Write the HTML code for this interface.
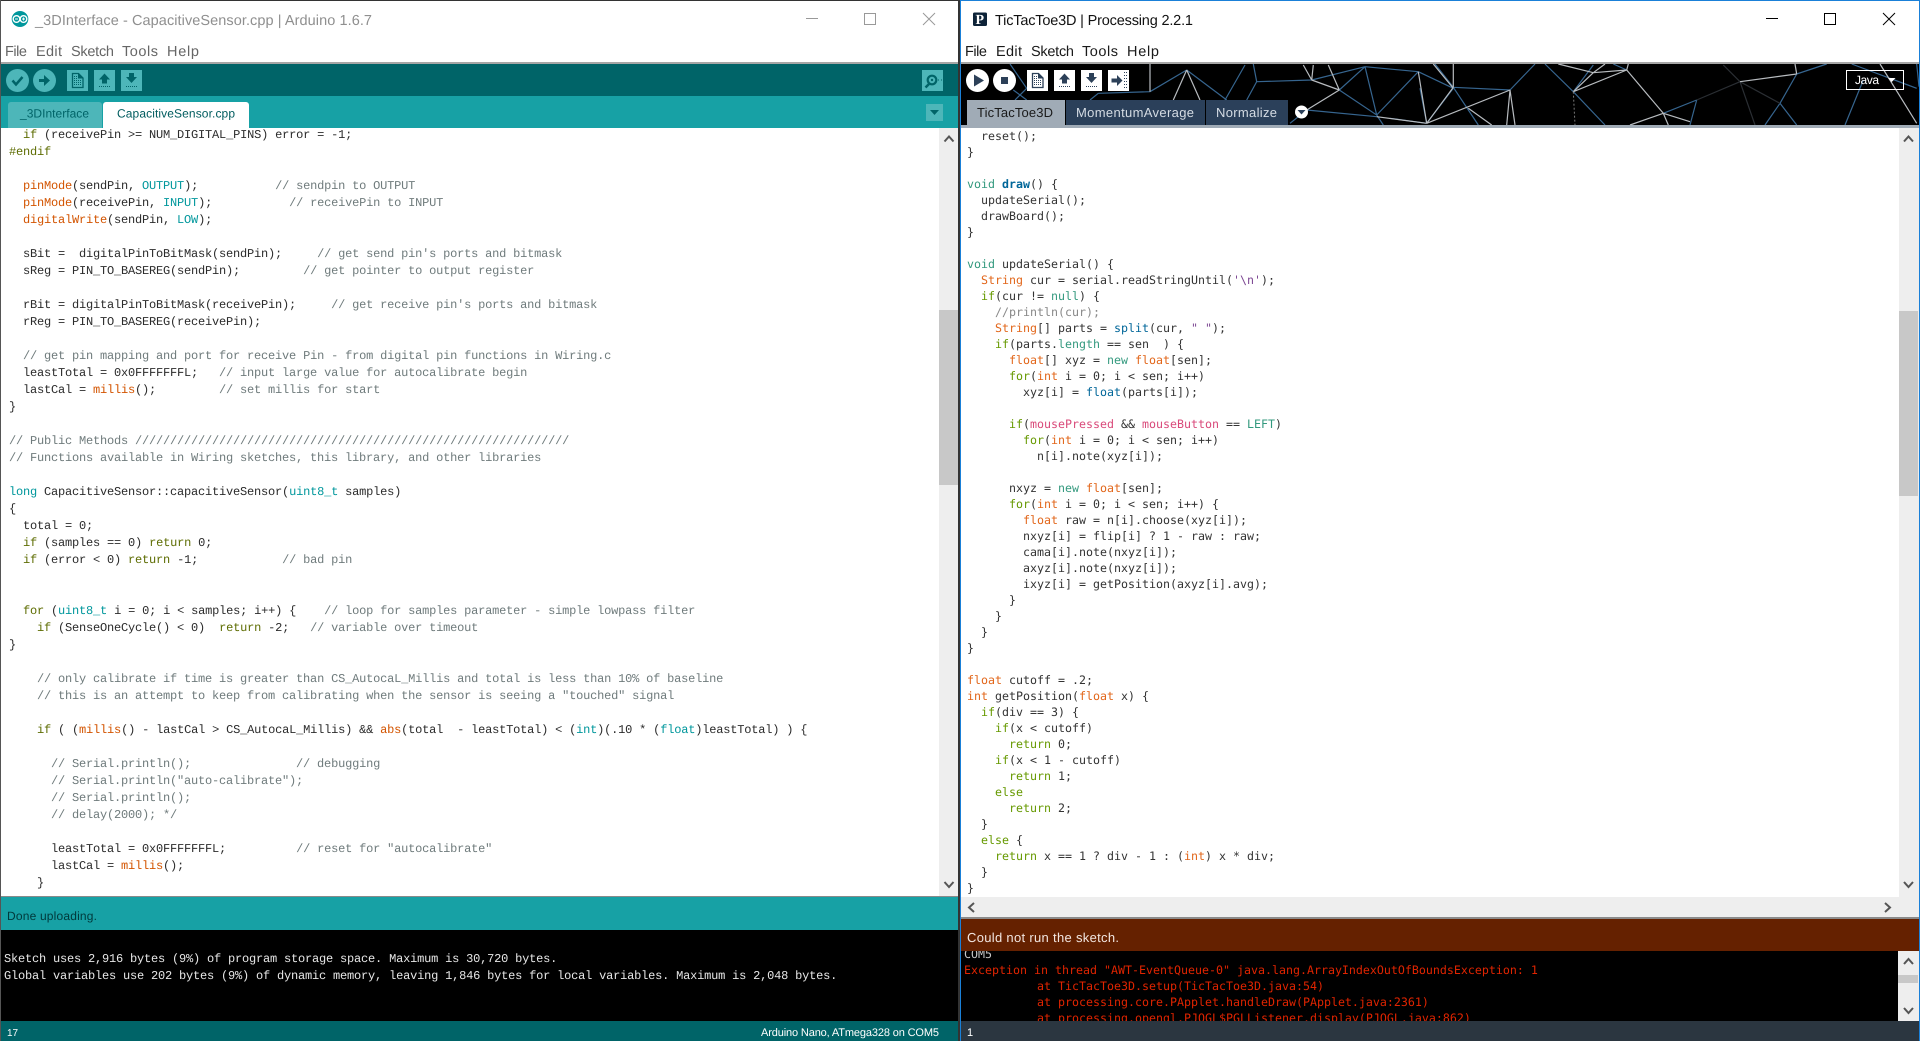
<!DOCTYPE html>
<html><head><meta charset="utf-8"><title>Arduino and Processing</title>
<style>
html,body{margin:0;padding:0;width:1920px;height:1041px;overflow:hidden;background:#fff}
svg.bg{position:absolute;left:0;top:0}
pre{position:absolute;margin:0;text-rendering:geometricPrecision;white-space:pre}
.l{font:12px/17px "Liberation Mono",monospace;letter-spacing:-.2px;color:#2b2b2b}
.r{font:11.63px/16px "DejaVu Sans Mono",monospace;color:#333}
.k{color:#5e6d03}.f{color:#d35400}.c{color:#00979c}.m{color:#6f7b7c}
.v{color:#33997e}.b{color:#006699}.o{color:#e2661a}.g{color:#669900}.p{color:#7d4793}.h{color:#d94a7a}.n{color:#888}
.cl{position:absolute;overflow:hidden}
svg text{font-family:"Liberation Sans",sans-serif;text-rendering:geometricPrecision}
</style></head><body>
<svg class="bg" width="1920" height="1041" viewBox="0 0 1920 1041" xmlns="http://www.w3.org/2000/svg">
<defs>
<g id="doc"><path d="M5.5 3.5h6l4.5 4.5v9.5H5.5z" fill="none" stroke="currentColor" stroke-width="1.3"/><path d="M11 3.5v5h5z" fill="currentColor"/><g fill="currentColor"><rect x="7" y="6" width="1" height="1"/><rect x="9" y="6" width="1" height="1"/><rect x="7" y="8" width="1" height="1"/><rect x="9" y="8" width="1" height="1"/><rect x="7" y="10" width="1" height="1"/><rect x="9" y="10" width="1" height="1"/><rect x="11" y="10" width="1" height="1"/><rect x="13" y="10" width="1" height="1"/><rect x="7" y="12" width="1" height="1"/><rect x="9" y="12" width="1" height="1"/><rect x="11" y="12" width="1" height="1"/><rect x="13" y="12" width="1" height="1"/><rect x="7" y="14" width="1" height="1"/><rect x="9" y="14" width="1" height="1"/><rect x="11" y="14" width="1" height="1"/><rect x="13" y="14" width="1" height="1"/></g></g>
<g id="dots"><rect x="5" y="16" width="1" height="1"/><rect x="7" y="16" width="1" height="1"/><rect x="9" y="16" width="1" height="1"/><rect x="11" y="16" width="1" height="1"/><rect x="13" y="16" width="1" height="1"/><rect x="15" y="16" width="1" height="1"/></g>
<g id="up"><path d="M10.5 3.5L16 9.5h-3v4H8v-4H5z" fill="currentColor"/><use href="#dots" fill="currentColor"/></g>
<g id="down"><path d="M8 3h5v4h3l-5.5 6L5 7h3z" fill="currentColor"/><use href="#dots" fill="currentColor"/></g>
<g id="exp"><path d="M3.5 8.500H9V5l5.500 5.500L9 16v-3.500H3.500z" fill="currentColor"/><g fill="currentColor"><rect x="16" y="2" width="1" height="1"/><rect x="18" y="2" width="1" height="1"/><rect x="16" y="5" width="1" height="1"/><rect x="18" y="5" width="1" height="1"/><rect x="16" y="8" width="1" height="1"/><rect x="18" y="8" width="1" height="1"/><rect x="16" y="11" width="1" height="1"/><rect x="18" y="11" width="1" height="1"/><rect x="16" y="14" width="1" height="1"/><rect x="18" y="14" width="1" height="1"/><rect x="16" y="17" width="1" height="1"/><rect x="18" y="17" width="1" height="1"/></g></g>
</defs>

<!-- LEFT WINDOW -->
<rect x="0" y="0" width="960" height="1041" fill="#fff"/>
<rect x="0" y="64" width="959" height="32" fill="#006468"/>
<rect x="0" y="96" width="959" height="32" fill="#17a1a5"/>
<rect x="0" y="62" width="959" height="2" fill="#a6a6a6"/>
<rect x="939" y="128" width="20" height="768" fill="#eeeeee"/>
<rect x="939" y="310" width="20" height="175" fill="#c8c8c8"/>
<rect x="0" y="896" width="959" height="1" fill="#8a8a8a"/>
<rect x="0" y="897" width="959" height="33" fill="#17a1a5"/>
<rect x="0" y="930" width="959" height="91" fill="#000"/>
<rect x="0" y="1021" width="959" height="20" fill="#006468"/>
<rect x="0" y="0" width="960" height="1" fill="#333"/>
<rect x="0" y="0" width="1" height="1041" fill="#555"/>

<!-- Arduino logo -->
<ellipse cx="20" cy="19" rx="8.300" ry="8" fill="#00979c"/>
<circle cx="16.500" cy="19" r="3.300" fill="none" stroke="#fff" stroke-width="1.400"/>
<circle cx="23.500" cy="19" r="3.300" fill="none" stroke="#fff" stroke-width="1.400"/>
<path d="M15 19h3M22 19h3M23.500 17.500v3" stroke="#fff" stroke-width=".9"/>

<text x="35" y="25" font-size="14.500" fill="#8f8f8f" textLength="337">_3DInterface - CapacitiveSensor.cpp | Arduino 1.6.7</text>
<g font-size="14.500" fill="#666">
<text x="5" y="56" textLength="22">File</text>
<text x="36" y="56" textLength="26">Edit</text>
<text x="71" y="56" textLength="43">Sketch</text>
<text x="122" y="56" textLength="36">Tools</text>
<text x="167" y="56" textLength="32">Help</text>
</g>
<g stroke="#999" stroke-width="1" fill="none">
<path d="M806 18.500h12"/>
<rect x="864.500" y="13.500" width="11" height="11"/>
<path d="M923 13l12 12M935 13l-12 12"/>
</g>

<!-- Left toolbar -->
<circle cx="17.500" cy="80.500" r="11.500" fill="#4db6b9"/>
<path d="M12.500 80.500l3.500 4 6.500-7.500" fill="none" stroke="#006468" stroke-width="2.500"/>
<circle cx="44.500" cy="80.500" r="11.500" fill="#4db6b9"/>
<path d="M39 79h5v-4l6 5.500-6 5.500v-4h-5z" fill="#006468"/>
<g color="#006468">
<rect x="67" y="70" width="21" height="21" fill="#4db6b9"/><use href="#doc" x="67" y="70"/>
<rect x="94" y="70" width="21" height="21" fill="#4db6b9"/><use href="#up" x="94" y="70"/>
<rect x="121" y="70" width="21" height="21" fill="#4db6b9"/><use href="#down" x="121" y="70"/>
</g>
<rect x="922" y="70" width="21" height="21" fill="#4db6b9"/>
<circle cx="932" cy="80" r="4.300" fill="none" stroke="#006468" stroke-width="2.200"/>
<circle cx="932" cy="80" r="1.200" fill="#006468"/>
<path d="M929 84l-3.500 3.500" stroke="#006468" stroke-width="2.500"/>
<path d="M938 80h1M941 80h1" stroke="#006468" stroke-width="1"/>

<path d="M8 128v-23a3 3 0 0 1 3-3h88a3 3 0 0 1 3 3v23z" fill="#4db6b9"/>
<path d="M103 128v-23a3 3 0 0 1 3-3h140a3 3 0 0 1 3 3v23z" fill="#fff"/>
<text x="20" y="117.500" font-size="12" fill="#006468" textLength="69">_3DInterface</text>
<text x="117" y="117.500" font-size="12" fill="#005c5f" textLength="118">CapacitiveSensor.cpp</text>
<rect x="926" y="104" width="17" height="17" fill="#4db6b9"/>
<path d="M930 110h9l-4.500 5z" fill="#006468"/>

<g fill="none" stroke="#555" stroke-width="2">
<path d="M944.500 141.500l4.500-5 4.500 5"/>
<path d="M944.500 882l4.500 5 4.500-5"/>
</g>

<text x="7" y="920" font-size="12" fill="#00393b" textLength="90">Done uploading.</text>
<text x="7" y="1036" font-size="10" fill="#fff" textLength="11">17</text>
<text x="761" y="1036" font-size="11" fill="#fff" textLength="178">Arduino Nano, ATmega328 on COM5</text>

<!-- shadow between windows -->
<rect x="958" y="0" width="2" height="1041" fill="#333"/>

<!-- RIGHT WINDOW -->
<rect x="960" y="0" width="960" height="1041" fill="#fff"/>
<rect x="961" y="64" width="958" height="61" fill="#000"/>

<!-- Network art -->
<path fill="none" stroke="#36658f" stroke-width="1.200" d="M1010 64L1026.7 88.300M1026.700 88.300L1015 100M1098.300 93.300L1150 91.700M1186.700 70L1150 91.700M1186.700 70L1226.700 100M1245 65L1225 100M1253.300 64L1256.700 81.700L1246.700 100M1256.700 81.700L1311.700 80M1311.700 80L1365 66.700M1339.300 90L1365 66.700M1339.300 90L1376.700 115L1383.300 125M1365 66.700L1418.300 71.700M1365 66.700L1376.700 115M1418.300 71.700L1376.700 115M1418.300 71.700L1453.300 88.300M1453.300 88.300L1426.700 123.300M1306.700 110L1290 123.300M1376.700 116.700L1306.700 110M1426.700 123.300L1390 118.300M1098.300 93.300L1090 100M1013.300 90L1026.700 100"/>
<path fill="none" stroke="#36658f" stroke-width="1.200" d="M1435 64L1453.300 87.300M1453.300 87.300L1510 90M1453.300 87.300L1478.300 125M1420 88.300L1426.700 123.300M1510 90L1535 64M1545 64L1573.300 91.700M1573.300 91.700L1593.300 65M1573.300 91.700L1605 125M1626.700 70L1613.300 64M1663.300 113.300L1696.700 100M1696.700 100L1690 125M1796.700 74L1826.700 64M1796.700 74L1780 103.300M1780 103.300L1765 125M1780 103.300L1796.700 125M1863.300 80L1845 125M1851.700 64L1916.700 88.300M1916.700 64L1919 86.700"/>
<path fill="none" stroke="#2a2e33" stroke-width="1.200" d="M1740 81.700L1696.700 100M1740 81.700L1780 103.300M1740 81.700L1755 125M1723.300 65L1740 81.700"/>
<path fill="none" stroke="#b8bcc0" stroke-width="1.200" d="M1186.700 70L1173.300 100M1186.700 70L1200 100M1150 64L1150 91.700M1311.700 80L1303.300 65M1313.300 65L1311.700 80M1311.700 80L1339.300 90M1339.300 90L1328.300 65M1339.300 90L1306.700 110M1418.300 71.700L1426.700 123.300M1453.300 88.300L1433.300 64M1376.700 116.700L1426.700 123.300"/>
<path fill="none" stroke="#b8bcc0" stroke-width="1.200" d="M1453.300 64L1453.300 87.300M1453.300 87.300L1426.700 123.300M1426.700 123.300L1510 90M1468.300 108.300L1491.700 125M1510 90L1506.700 125M1510 90L1515 125M1558.300 64L1593.300 72.700L1626.700 70M1593.300 72.700L1605 64M1593.300 72.700L1573.300 91.700M1626.700 70L1628.300 64M1626.700 70L1573.300 91.700M1626.700 70L1663.300 113.300M1663.300 113.300L1630 125M1663.300 113.300L1690 121.700M1663.300 113.300L1668.300 125M1740 81.700L1796.700 74M1796.700 74L1795 64M1880 64L1916.700 123.300"/>
<path fill="none" stroke="#777" stroke-width="1" stroke-dasharray="2 2" d="M1573.300 91.700L1575 125"/>

<!-- right title/menu -->
<rect x="973" y="12.500" width="14" height="13.500" rx="1.500" fill="#0d2338"/>
<text x="975.500" y="24" font-size="14" font-weight="bold" fill="#fff" style="font-family:'Liberation Serif',serif">P</text>
<text x="995" y="25" font-size="14.500" fill="#111" textLength="198">TicTacToe3D | Processing 2.2.1</text>
<g font-size="14.500" fill="#1a1a1a">
<text x="965" y="56" textLength="22">File</text>
<text x="996" y="56" textLength="26">Edit</text>
<text x="1031" y="56" textLength="43">Sketch</text>
<text x="1082" y="56" textLength="36">Tools</text>
<text x="1127" y="56" textLength="32">Help</text>
</g>
<g stroke="#000" stroke-width="1" fill="none">
<path d="M1766 18.500h12"/>
<rect x="1824.500" y="13.500" width="11" height="11"/>
<path d="M1883 13l12 12M1895 13l-12 12"/>
</g>
<rect x="961" y="62" width="958" height="2" fill="#a6a6a6"/>

<!-- Right toolbar -->
<circle cx="977.500" cy="80.500" r="11.500" fill="#fff"/>
<path d="M974 74.500l10 6-10 6z" fill="#2c4058"/>
<circle cx="1004.500" cy="80.500" r="11.500" fill="#fff"/>
<rect x="1001" y="77" width="7" height="7" fill="#2c4058"/>
<g color="#2c4058">
<rect x="1027" y="70" width="21" height="21" fill="#fff"/><use href="#doc" x="1027" y="70"/>
<rect x="1054" y="70" width="21" height="21" fill="#fff"/><use href="#up" x="1054" y="70"/>
<rect x="1081" y="70" width="21" height="21" fill="#fff"/><use href="#down" x="1081" y="70"/>
<rect x="1108" y="70" width="21" height="21" fill="#fff"/><use href="#exp" x="1108" y="70"/>
</g>

<!-- Right tabs -->
<rect x="961" y="125" width="958" height="3" fill="#a0abb6"/>
<rect x="967" y="100" width="98" height="25" fill="#a0abb6"/>
<rect x="1066" y="100" width="139" height="25" fill="#2b405a"/>
<rect x="1206" y="100" width="82" height="25" fill="#2b405a"/>
<text x="977" y="117" font-size="13" fill="#1a1a1a" textLength="76">TicTacToe3D</text>
<text x="1076" y="117" font-size="13" fill="#d5dce4" textLength="118">MomentumAverage</text>
<text x="1216" y="117" font-size="13" fill="#d5dce4" textLength="61">Normalize</text>
<circle cx="1301.500" cy="112" r="6.500" fill="#fff"/>
<path d="M1297.500 110h8l-4 4.500z" fill="#2b405a"/>

<rect x="1846.500" y="70.500" width="57" height="19" fill="#000" stroke="#fff" stroke-width="1" fill-opacity="0"/>
<text x="1855" y="84" font-size="12" fill="#fff" textLength="24">Java</text>
<path d="M1888 78h7.500l-3.750 4z" fill="#fff"/>

<!-- Right scrollbars -->
<rect x="1899" y="128" width="20" height="769" fill="#eeeeee"/>
<rect x="1899" y="311" width="19" height="185" fill="#c8c8c8"/>
<rect x="961" y="897" width="958" height="20" fill="#eeeeee"/>
<rect x="961" y="917" width="958" height="2" fill="#8a8a8a"/>
<g fill="none" stroke="#555" stroke-width="2">
<path d="M1904 141.500l4.500-5 4.500 5"/>
<path d="M1904 882l4.500 5 4.500-5"/>
<path d="M974 903l-5 4.500 5 4.500"/>
<path d="M1885 903l5 4.500-5 4.500"/>
</g>
<rect x="961" y="919" width="958" height="32" fill="#652100"/>
<text x="967" y="942" font-size="13" fill="#f2e6e0" textLength="152">Could not run the sketch.</text>
<rect x="961" y="951" width="958" height="70" fill="#000"/>
<rect x="1898" y="951" width="21" height="70" fill="#eeeeee"/>
<rect x="1898" y="975" width="20" height="8" fill="#c8c8c8"/>
<g fill="none" stroke="#555" stroke-width="2">
<path d="M1904 964l4.500-5 4.500 5"/>
<path d="M1904 1008l4.500 5 4.500-5"/>
</g>
<rect x="961" y="1021" width="958" height="20" fill="#2b3640"/>
<text x="967" y="1036" font-size="11" fill="#fff">1</text>

<rect x="960" y="0" width="1" height="1041" fill="#1a80d8"/>
<rect x="1919" y="0" width="1" height="1041" fill="#1a80d8"/>
<rect x="960" y="0" width="960" height="1" fill="#1a80d8"/>
</svg>

<pre class="l" style="left:9px;top:127px">  <span class="k">if</span> (receivePin &gt;= NUM_DIGITAL_PINS) error = -1;
<span class="k">#endif</span>

  <span class="f">pinMode</span>(sendPin, <span class="c">OUTPUT</span>);           <span class="m">// sendpin to OUTPUT</span>
  <span class="f">pinMode</span>(receivePin, <span class="c">INPUT</span>);           <span class="m">// receivePin to INPUT</span>
  <span class="f">digitalWrite</span>(sendPin, <span class="c">LOW</span>);

  sBit =  digitalPinToBitMask(sendPin);     <span class="m">// get send pin's ports and bitmask</span>
  sReg = PIN_TO_BASEREG(sendPin);         <span class="m">// get pointer to output register</span>

  rBit = digitalPinToBitMask(receivePin);     <span class="m">// get receive pin's ports and bitmask</span>
  rReg = PIN_TO_BASEREG(receivePin);

  <span class="m">// get pin mapping and port for receive Pin - from digital pin functions in Wiring.c</span>
  leastTotal = 0x0FFFFFFFL;   <span class="m">// input large value for autocalibrate begin</span>
  lastCal = <span class="f">millis</span>();         <span class="m">// set millis for start</span>
}

<span class="m">// Public Methods //////////////////////////////////////////////////////////////</span>
<span class="m">// Functions available in Wiring sketches, this library, and other libraries</span>

<span class="c">long</span> CapacitiveSensor::capacitiveSensor(<span class="c">uint8_t</span> samples)
{
  total = 0;
  <span class="k">if</span> (samples == 0) <span class="k">return</span> 0;
  <span class="k">if</span> (error &lt; 0) <span class="k">return</span> -1;            <span class="m">// bad pin</span>


  <span class="k">for</span> (<span class="c">uint8_t</span> i = 0; i &lt; samples; i++) {    <span class="m">// loop for samples parameter - simple lowpass filter</span>
    <span class="k">if</span> (SenseOneCycle() &lt; 0)  <span class="k">return</span> -2;   <span class="m">// variable over timeout</span>
}

    <span class="m">// only calibrate if time is greater than CS_AutocaL_Millis and total is less than 10% of baseline</span>
    <span class="m">// this is an attempt to keep from calibrating when the sensor is seeing a "touched" signal</span>

    <span class="k">if</span> ( (<span class="f">millis</span>() - lastCal &gt; CS_AutocaL_Millis) &amp;&amp; <span class="f">abs</span>(total  - leastTotal) &lt; (<span class="c">int</span>)(.10 * (<span class="c">float</span>)leastTotal) ) {

      <span class="m">// Serial.println();               // debugging</span>
      <span class="m">// Serial.println("auto-calibrate");</span>
      <span class="m">// Serial.println();</span>
      <span class="m">// delay(2000); */</span>

      leastTotal = 0x0FFFFFFFL;          <span class="m">// reset for "autocalibrate"</span>
      lastCal = <span class="f">millis</span>();
    }</pre>

<pre class="l" style="left:4px;top:951px;color:#e6e6e6">Sketch uses 2,916 bytes (9%) of program storage space. Maximum is 30,720 bytes.
Global variables use 202 bytes (9%) of dynamic memory, leaving 1,846 bytes for local variables. Maximum is 2,048 bytes.</pre>

<pre class="r" style="left:967px;top:128px">  reset();
}

<span class="v">void</span> <b class="b">draw</b>() {
  updateSerial();
  drawBoard();
}

<span class="v">void</span> updateSerial() {
  <span class="o">String</span> cur = serial.readStringUntil(<span class="p">'\n'</span>);
  <span class="g">if</span>(cur != <span class="v">null</span>) {
    <span class="n">//println(cur);</span>
    <span class="o">String</span>[] parts = <span class="b">split</span>(cur, <span class="p">" "</span>);
    <span class="g">if</span>(parts.<span class="v">length</span> == sen  ) {
      <span class="o">float</span>[] xyz = <span class="v">new</span> <span class="o">float</span>[sen];
      <span class="g">for</span>(<span class="o">int</span> i = 0; i &lt; sen; i++)
        xyz[i] = <span class="b">float</span>(parts[i]);

      <span class="g">if</span>(<span class="h">mousePressed</span> &amp;&amp; <span class="h">mouseButton</span> == <span class="v">LEFT</span>)
        <span class="g">for</span>(<span class="o">int</span> i = 0; i &lt; sen; i++)
          n[i].note(xyz[i]);

      nxyz = <span class="v">new</span> <span class="o">float</span>[sen];
      <span class="g">for</span>(<span class="o">int</span> i = 0; i &lt; sen; i++) {
        <span class="o">float</span> raw = n[i].choose(xyz[i]);
        nxyz[i] = flip[i] ? 1 - raw : raw;
        cama[i].note(nxyz[i]);
        axyz[i].note(nxyz[i]);
        ixyz[i] = getPosition(axyz[i].avg);
      }
    }
  }
}

<span class="o">float</span> cutoff = .2;
<span class="o">int</span> getPosition(<span class="o">float</span> x) {
  <span class="g">if</span>(div == 3) {
    <span class="g">if</span>(x &lt; cutoff)
      <span class="g">return</span> 0;
    <span class="g">if</span>(x &lt; 1 - cutoff)
      <span class="g">return</span> 1;
    <span class="g">else</span>
      <span class="g">return</span> 2;
  }
  <span class="g">else</span> {
    <span class="g">return</span> x == 1 ? div - 1 : (<span class="o">int</span>) x * div;
  }
}</pre>

<div class="cl" style="left:961px;top:951px;width:937px;height:70px">
<pre class="r" style="left:3px;top:-5px;color:#e02400"><span style="color:#c8c8c8">COM5</span>
Exception in thread "AWT-EventQueue-0" java.lang.ArrayIndexOutOfBoundsException: 1
<span style="margin-left:3px">          at TicTacToe3D.setup(TicTacToe3D.java:54)</span>
<span style="margin-left:3px">          at processing.core.PApplet.handleDraw(PApplet.java:2361)</span>
<span style="margin-left:3px">          at processing.opengl.PJOGL$PGLListener.display(PJOGL.java:862)</span></pre>
</div>
</body></html>
